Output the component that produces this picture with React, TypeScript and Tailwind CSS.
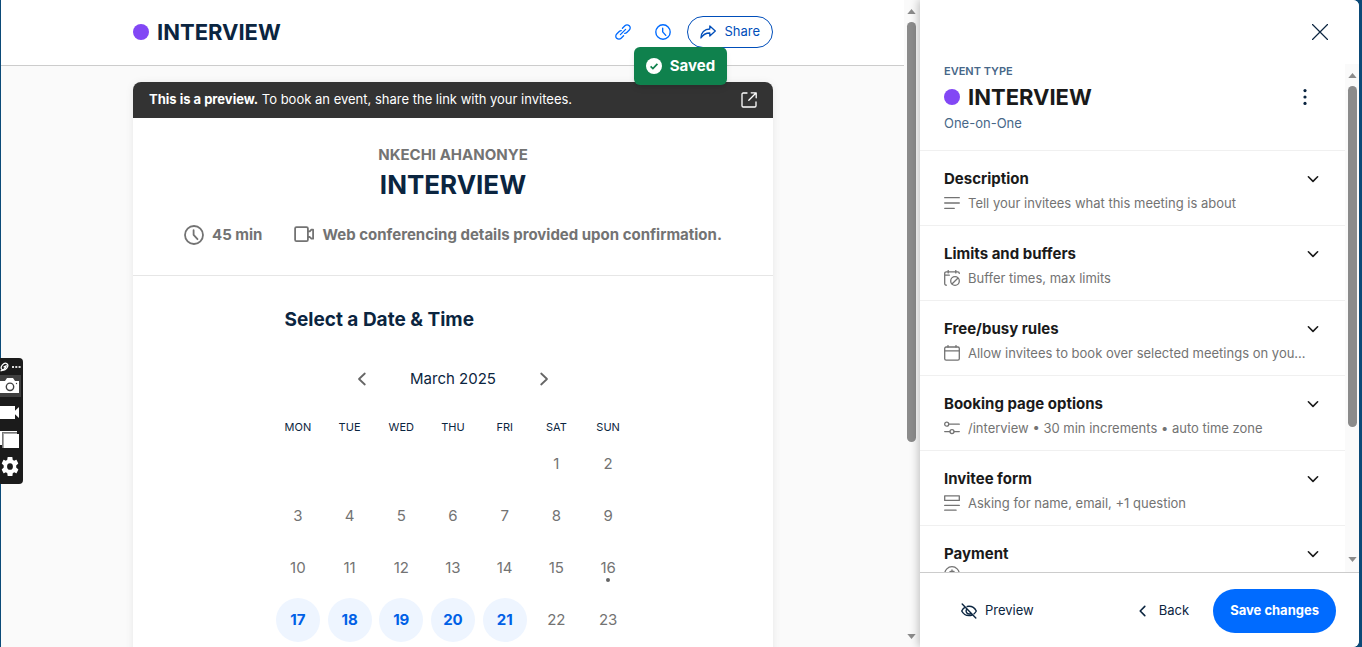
import type { ReactNode } from "react";

type IconProps = { children: ReactNode; className: string; box?: string; width?: number };

function Icon({ children, className, box = "0 0 16 16", width = 1.4 }: IconProps) {
  return (
    <svg
      viewBox={box}
      className={className}
      fill="none"
      stroke="currentColor"
      strokeWidth={width}
      strokeLinecap="round"
      strokeLinejoin="round"
      aria-hidden="true"
    >
      {children}
    </svg>
  );
}

function ClockIcon({ className, width }: { className: string; width?: number }) {
  return (
    <Icon className={className} box="0 0 20 20" width={width}>
      <circle cx="10" cy="10" r="9" />
      <path d="M9.6 5.2v4.6l3.9 4.4" />
    </Icon>
  );
}

function ChevronDown() {
  return (
    <Icon className="h-4 w-4 shrink-0 text-[#1a1a1a]" width={1.6}>
      <path d="M3.4 5.8 8 10.4l4.6-4.6" />
    </Icon>
  );
}

function ScrollBar({ track, thumb }: { track: string; thumb: string }) {
  return (
    <div className={`flex shrink-0 flex-col items-center bg-[#fafafa] ${track}`} aria-hidden="true">
      <svg viewBox="0 0 10 6" className="h-[5px] w-[9px] shrink-0 fill-[#8b8b8b]">
        <path d="M5 0 10 6H0z" />
      </svg>
      <div className={`mt-2 w-[9px] rounded-full bg-[#8b8b8b] ${thumb}`} />
      <svg viewBox="0 0 10 6" className="mt-auto h-[5px] w-[9px] shrink-0 fill-[#8b8b8b]">
        <path d="M0 0h10L5 6z" />
      </svg>
    </div>
  );
}

const sections: { title: string; detail?: string; icon: ReactNode }[] = [
  {
    title: "Description",
    detail: "Tell your invitees what this meeting is about",
    icon: <path d="M.7 2.7h14.6M.7 8h14.6M.7 13.3h9.6" />,
  },
  {
    title: "Limits and buffers",
    detail: "Buffer times, max limits",
    icon: (
      <>
        <path d="M2.4 15.2a1.6 1.6 0 0 1-1.7-1.6V3.4c0-.9.7-1.6 1.6-1.6h11.4c.9 0 1.6.7 1.6 1.6M.7 5.2h4.6M4.2.5v2.4M11.8.5v2.4" />
        <circle cx="11" cy="11" r="4.3" />
        <path d="m8.2 13.8 5.6-5.6" />
      </>
    ),
  },
  {
    title: "Free/busy rules",
    detail: "Allow invitees to book over selected meetings on your calendar",
    icon: (
      <>
        <rect x=".7" y="2" width="14.6" height="13.2" rx="1.4" />
        <path d="M.7 5.8h14.6M4 .6V2M12 .6V2" />
      </>
    ),
  },
  {
    title: "Booking page options",
    detail: "/interview • 30 min increments • auto time zone",
    icon: (
      <>
        <circle cx="2.7" cy="4.2" r="2" />
        <path d="M4.9 4.2h10.4M.7 11.6h5M10.2 11.6h5.1" />
        <circle cx="8" cy="11.6" r="2" />
      </>
    ),
  },
  {
    title: "Invitee form",
    detail: "Asking for name, email, +1 question",
    icon: <path d="M.7.8h14.6v4.6H.7zM.7 10.4h14.6M.7 15.2h11.4" />,
  },
  {
    title: "Payment",
    icon: (
      <>
        <circle cx="8" cy="8" r="7.3" />
        <path d="M10 5.4H7a1.3 1.3 0 0 0 0 2.6h2a1.3 1.3 0 0 1 0 2.6H6M8 4v8" />
      </>
    ),
  },
];

const weekdays = ["MON", "TUE", "WED", "THU", "FRI", "SAT", "SUN"];
const weeks: (number | null)[][] = [
  [null, null, null, null, null, 1, 2],
  [3, 4, 5, 6, 7, 8, 9],
  [10, 11, 12, 13, 14, 15, 16],
  [17, 18, 19, 20, 21, 22, 23],
];
const openDays = [17, 18, 19, 20, 21];
const today = 16;

function Calendar() {
  return (
    <table className="mx-auto mt-[21px] w-[362px] table-fixed border-collapse">
      <thead>
        <tr>
          {weekdays.map((d) => (
            <th key={d} scope="col" className="p-0 text-[11px] leading-[22px] font-normal text-[#0b2540]">
              {d}
            </th>
          ))}
        </tr>
      </thead>
      <tbody>
        {weeks.map((week, i) => (
          <tr key={i} className="h-13">
            {week.map((day, j) => (
              <td key={j} className="p-0 text-center">
                {day !== null && (
                  <button
                    type="button"
                    disabled={!openDays.includes(day)}
                    className={`relative mx-auto flex h-11 w-11 items-center justify-center rounded-full text-[15px] ${
                      openDays.includes(day) ? "bg-[#eef5ff] font-bold text-[#0060e6]" : "text-[#737373]"
                    }`}
                  >
                    {day}
                    {day === today && <span className="absolute bottom-2 h-1 w-1 rounded-full bg-[#666]" />}
                  </button>
                )}
              </td>
            ))}
          </tr>
        ))}
      </tbody>
    </table>
  );
}

function PreviewCard() {
  return (
    <section className="mx-auto mt-4 w-full max-w-[640px] rounded-t-lg bg-white shadow-[0_1px_8px_rgba(0,0,0,0.08)]">
      <div className="flex h-9 items-center justify-between rounded-t-lg bg-[#333] px-4 text-[13px] text-white">
        <p>
          <b>This is a preview.</b> To book an event, share the link with your invitees.
        </p>
        <a href="#preview" aria-label="Open preview">
          <Icon className="h-4 w-4" width={1.3}>
            <path d="M6 1H2.2C1.5 1 1 1.5 1 2.2v11.6c0 .7.5 1.2 1.2 1.2h11.6c.7 0 1.2-.5 1.2-1.2V10M10.2.8h5v5M15 1 7.8 8.2" />
          </Icon>
        </a>
      </div>
      <header className="border-b border-[#e6e6e6] pt-[25px] pb-7 text-center font-bold">
        <p className="text-[15px] leading-6 text-[#737373]">NKECHI AHANONYE</p>
        <h2 className="text-[26px] leading-9 text-[#0b2540]">INTERVIEW</h2>
        <div className="mt-5 flex justify-center gap-8 text-[15px] leading-6 text-[#737373]">
          <span className="flex items-center gap-2">
            <ClockIcon className="h-5 w-5" width={1.8} />
            45 min
          </span>
          <span className="flex items-center gap-2">
            <Icon className="h-5 w-5" box="0 0 20 20" width={1.8}>
              <path d="M2.500 2.200h10c.8 0 1.400.6 1.400 1.400v11.200c0 .8-.6 1.400-1.400 1.400h-10c-.8 0-1.400-.6-1.400-1.400V3.600c0-.8.6-1.400 1.400-1.400zM14 6.400h1.800l1.600-1.700h1.700v9h-1.700l-1.600-1.700H14" />
            </Icon>
            Web conferencing details provided upon confirmation.
          </span>
        </div>
      </header>
      <div className="pt-7 pb-10">
        <h3 className="mx-auto w-[337px] text-[19px] leading-8 font-bold text-[#0b2540]">Select a Date &amp; Time</h3>
        <div className="mx-auto mt-[27px] flex h-8 w-[198px] items-center justify-between text-[15px] text-[#0b2540]">
          <button type="button" aria-label="Previous month">
            <Icon className="h-4 w-4 text-[#666]" width={1.8}>
              <path d="M10.800 2.500 5 8l5.800 5.500" />
            </Icon>
          </button>
          <span>March 2025</span>
          <button type="button" aria-label="Next month">
            <Icon className="h-4 w-4 text-[#666]" width={1.8}>
              <path d="M5.200 2.500 11 8l-5.800 5.500" />
            </Icon>
          </button>
        </div>
        <Calendar />
      </div>
    </section>
  );
}

function Editor() {
  return (
    <aside className="relative flex w-[439px] shrink-0 flex-col bg-white shadow-[-2px_0_8px_rgba(0,0,0,0.22)]">
      <div className="flex h-16 shrink-0 items-center justify-end pr-[31px]">
        <button type="button" aria-label="Close" className="text-[#0b2540]">
          <Icon className="h-4 w-4" width={1.2}>
            <path d="m.5.5 15 15M15.500.5l-15 15" />
          </Icon>
        </button>
      </div>
      <div className="flex min-h-0 flex-1">
        <div className="min-w-0 flex-1 overflow-hidden">
          <header className="flex h-[87px] items-start justify-between border-b border-[#f0f0f0] pr-8 pl-6">
            <div className="text-[#476788]">
              <p className="text-[11px] leading-[14px] font-semibold">EVENT TYPE</p>
              <h2 className="mt-[3px] flex h-8 items-center gap-2 text-[22px] font-bold text-[#1a1a1a]">
                <span className="h-4 w-4 rounded-full bg-[#8247f5]" />
                INTERVIEW
              </h2>
              <p className="text-[13px] leading-5">One-on-One</p>
            </div>
            <button type="button" aria-label="More options" className="mt-[25px] text-[#0b2540]">
              <svg viewBox="0 0 16 16" className="h-4 w-4 fill-current" aria-hidden="true">
                <circle cx="8" cy="1.6" r="1.6" />
                <circle cx="8" cy="8" r="1.6" />
                <circle cx="8" cy="14.4" r="1.6" />
              </svg>
            </button>
          </header>
          {sections.map((s) => (
            <button
              key={s.title}
              type="button"
              className="flex h-[75px] w-full items-start justify-between border-b border-[#f0f0f0] px-6 pt-4 text-left"
            >
              <span className="min-w-0 max-w-[363px]">
                <span className="block text-[15px] leading-6 font-bold text-[#1a1a1a]">{s.title}</span>
                <span className="flex items-center gap-2 text-[13px] leading-6 text-[#737373]">
                  <Icon className="h-4 w-4 shrink-0" width={1.3}>
                    {s.icon}
                  </Icon>
                  {s.detail && <span className="truncate">{s.detail}</span>}
                </span>
              </span>
              <span className="mt-1 -ml-4">
                <ChevronDown />
              </span>
            </button>
          ))}
        </div>
        <ScrollBar track="w-[14px] pt-[9px] pb-[10px]" thumb="h-[341px]" />
      </div>
      <footer className="flex h-[75px] shrink-0 items-center border-t border-[#ccc] pt-[2px] pr-[23px] pl-[41px] text-[13px] text-[#0b2540]">
        <button type="button" className="flex items-center gap-2">
          <Icon className="h-4 w-4" width={1.4}>
            <path d="M1.200 1 14.800 15M4.200 4.200C2.600 5.200 1.400 6.600.7 8c1.300 2.500 4 4.600 7.300 4.600 1.100 0 2.100-.2 3-.6M6.200 3.500A8 8 0 0 1 8 3.300c3.300 0 6 2.200 7.300 4.700a10 10 0 0 1-2.200 2.800M5.500 6.600a3 3 0 0 0 3.700 4.200" />
          </Icon>
          Preview
        </button>
        <button type="button" className="ml-auto flex items-center gap-2">
          <Icon className="h-4 w-4" width={1.6}>
            <path d="M9.800 3.400 5.200 8l4.600 4.600" />
          </Icon>
          Back
        </button>
        <button type="button" className="ml-6 h-11 rounded-full bg-[#006bff] px-[17px] font-bold text-white">
          Save changes
        </button>
      </footer>
    </aside>
  );
}

function Recorder() {
  return (
    <div className="absolute top-[358px] left-0 flex h-[126px] w-[23px] flex-col rounded-r bg-[#1b1b1b] text-white">
      <div className="flex h-[17px] items-center gap-[3px]">
        <svg viewBox="0 0 10 10" className="h-[10px] w-[9px]" fill="none" stroke="currentColor" strokeWidth="1.4" aria-hidden="true">
          <ellipse cx="5" cy="4.600" rx="4.200" ry="3" transform="rotate(-50 5 4.600)" />
          <path d="M.6 9.400C3 9 6.400 6.500 6.800 3.800L4 5.200" />
        </svg>
        <svg viewBox="0 0 9 2" className="h-[2px] w-[9px] fill-[#ddd]" aria-hidden="true">
          <path d="M0 0h2v2H0zM3.300 0h2v2h-2zM6.600 0h2v2h-2z" />
        </svg>
      </div>
      <button type="button" aria-label="Capture image" className="h-[22px] w-[21px] bg-[#404040]">
        <svg viewBox="0 0 21 22" className="h-[22px] w-[21px]" aria-hidden="true">
          <path d="M0 6h5l2-3h6l2 3h4v12H0z" fill="#fff" />
          <circle cx="10" cy="11.800" r="3.700" fill="none" stroke="#404040" strokeWidth="1.400" />
          <circle cx="16.500" cy="8.500" r=".7" fill="#404040" />
        </svg>
      </button>
      <button type="button" aria-label="Capture video" className="mt-2 h-[15px] w-[21px]">
        <svg viewBox="0 0 21 15" className="h-[15px] w-[21px] fill-white" aria-hidden="true">
          <path d="M0 1h15v4.800L19 2v11l-4-3.800V14H0z" />
        </svg>
      </button>
      <button type="button" aria-label="Gallery" className="mt-[10px] h-[18px] w-[21px]">
        <svg viewBox="0 0 21 18" className="h-[18px] w-[21px]" aria-hidden="true">
          <path d="M0 1h17v14H0z" fill="#fff" />
          <path d="M2 2h15v2h2v14H2z" fill="#a8a8a8" />
          <path d="M2 2h1v16H2zM2 2h15v1H2z" fill="#777" />
          <path d="M4 4h15v14H4z" fill="#fff" />
        </svg>
      </button>
      <button type="button" aria-label="Settings" className="mt-[7px] h-5 w-5">
        <svg viewBox="0 0 24 24" className="h-[23px] w-[20px] fill-white" preserveAspectRatio="none" aria-hidden="true">
          <path d="M19.400 13c.04-.3.060-.65.060-1s-.02-.7-.07-1l2.300-1.800a.5.5 0 0 0 .12-.6l-1.900-3.300a.5.5 0 0 0-.6-.25l-2.400 1a7 7 0 0 0-1.700-1L14.900 2.400a.5.5 0 0 0-.5-.4h-4.800a.5.5 0 0 0-.5.400l-.36 2.600a7 7 0 0 0-1.700 1l-2.400-1a.5.5 0 0 0-.6.250L2.200 8.600a.5.5 0 0 0 .12.6L4.500 11a7 7 0 0 0 0 2l-2.200 1.800a.5.5 0 0 0-.12.600l1.900 3.300c.1.200.4.300.6.250l2.400-1a7 7 0 0 0 1.700 1l.36 2.600c.03.250.250.400.5.400h4.800c.250 0 .5-.15.500-.4l.36-2.600a7 7 0 0 0 1.700-1l2.400 1c.2.100.5 0 .6-.250l1.900-3.300a.5.500 0 0 0-.12-.6zM12 15.500a3.500 3.500 0 1 1 0-7 3.500 3.500 0 0 1 0 7z" fillRule="evenodd" />
        </svg>
      </button>
    </div>
  );
}

export default function App() {
  return (
    <div className="relative h-screen overflow-hidden bg-[#0b4a78] pr-[3px] pl-px font-['Inter','Liberation_Sans',sans-serif] text-[#1a1a1a]">
      <div className="flex h-full overflow-hidden rounded-r-md bg-[#fafafa]">
        <main className="min-w-0 flex-1">
          <header className="h-[66px] border-b border-[#ccc] bg-white pl-px">
            <div className="mx-auto flex h-16 max-w-[640px] items-center">
              <h1 className="flex items-center gap-2 text-[22px] font-bold text-[#0b2540]">
                <span className="h-4 w-4 rounded-full bg-[#8247f5]" />
                INTERVIEW
              </h1>
              <button type="button" aria-label="Copy link" className="ml-auto text-[#006bff]">
                <Icon className="h-4 w-4" width={1.3}>
                  <path d="m5.400 10.600 5.200-5.200M7.400 4.200l2.500-2.500a3 3 0 0 1 4.300 0h.1a3 3 0 0 1 0 4.300l-2.500 2.500a3 3 0 0 1-2.100.9M8.600 11.800l-2.500 2.500a3 3 0 0 1-4.300 0h-.1a3 3 0 0 1 0-4.300l2.500-2.500a3 3 0 0 1 2.100-.9" />
                </Icon>
              </button>
              <button type="button" aria-label="Availability" className="ml-6 text-[#006bff]">
                <ClockIcon className="h-4 w-4" width={1.7} />
              </button>
              <a
                href="#share"
                className="ml-4 flex h-8 items-center gap-2 rounded-full border border-[#004eba] px-3 text-[13px] text-[#004eba]"
              >
                <Icon className="h-4 w-4" width={1.3}>
                  <path d="M9.800 5V2l5.500 5-5.500 5V9C5.600 9 3 10.500.9 14c0-5.500 3.600-9 8.900-9z" />
                </Icon>
                Share
              </a>
            </div>
          </header>
          <div className="pl-px">
            <PreviewCard />
          </div>
        </main>
        <ScrollBar track="mr-px w-[15px] pt-[9px] pb-[8px]" thumb="h-[420px]" />
        <Editor />
      </div>
      <div className="pointer-events-none absolute inset-x-0 top-[47px] flex justify-center pr-px">
        <div role="status" className="flex h-[38px] items-center gap-2 rounded-md bg-[#0f814d] px-3 text-[15px] font-bold text-white shadow-md">
          <svg viewBox="0 0 16 16" className="h-4 w-4" aria-hidden="true">
            <circle cx="8" cy="8" r="8" fill="#fff" />
            <path d="m4.600 8.400 2.300 2.200 4.500-4.800" fill="none" stroke="#0f814d" strokeWidth="1.7" />
          </svg>
          Saved
        </div>
      </div>
      <Recorder />
    </div>
  );
}
